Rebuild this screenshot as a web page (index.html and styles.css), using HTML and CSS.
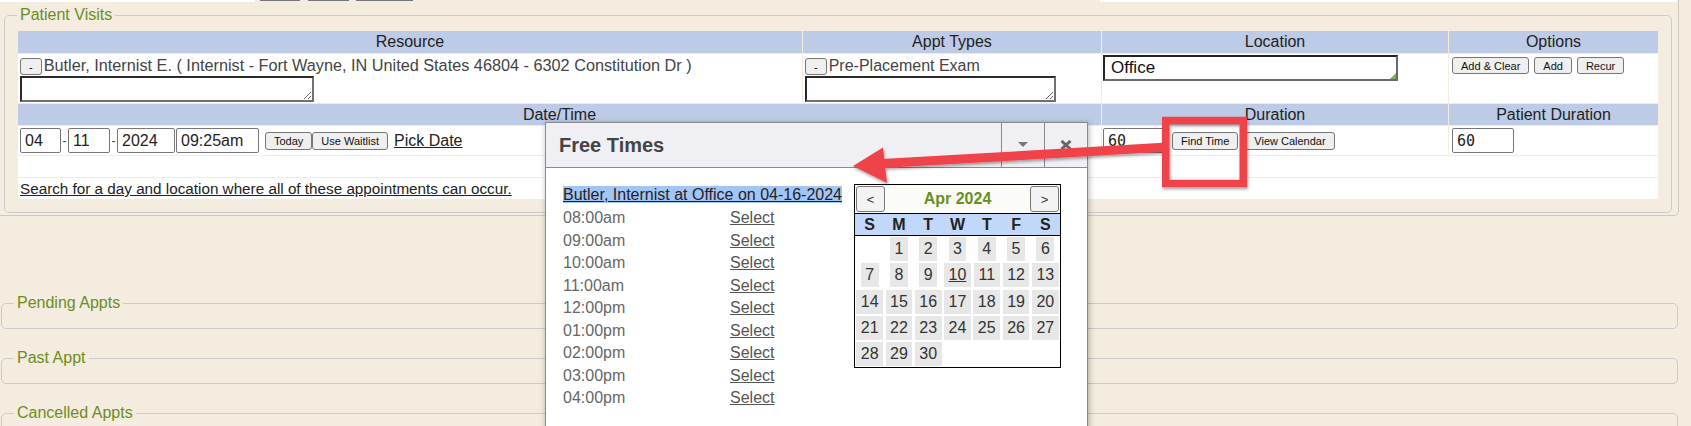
FILE: index.html
```html
<!DOCTYPE html>
<html lang="en">
<head>
  <meta charset="UTF-8" />
  <title>Patient Visits</title>
  <link rel="stylesheet" href="styles.css">
</head>
<body>
  <div class="page">
    <div class="outer">
      <div class="topstrip">
        <span class="ts-left"></span>
        <span class="ts-btn b1"></span>
        <span class="ts-btn b2"></span>
        <span class="ts-btn b3"></span>
        <span class="ts-right"></span>
      </div>

      <fieldset class="section">
        <legend>Patient Visits</legend>
        <table class="visits">
          <colgroup>
            <col class="c-res"><col class="c-type"><col class="c-loc"><col class="c-opt">
          </colgroup>
          <tr class="head">
            <th>Resource</th><th>Appt Types</th><th>Location</th><th>Options</th>
          </tr>
          <tr class="entry">
            <td>
              <div class="line res-line"><button class="mini">-</button>Butler, Internist E. ( Internist - Fort Wayne, IN United States 46804 - 6302 Constitution Dr )</div>
              <textarea class="notes res-notes"></textarea>
            </td>
            <td>
              <div class="line"><button class="mini">-</button>Pre-Placement Exam</div>
              <textarea class="notes type-notes"></textarea>
            </td>
            <td class="loc-cell">
              <span class="loc-wrap"><input class="loc" type="text" value="Office"></span>
            </td>
            <td class="opt-cell"><button class="small">Add &amp; Clear</button><button class="small">Add</button><button class="small">Recur</button></td>
          </tr>
          <tr class="head head2">
            <th colspan="2">Date/Time</th><th>Duration</th><th>Patient Duration</th>
          </tr>
          <tr class="inputs">
            <td colspan="2"><input class="d mm" value="04"><span class="dash">-</span><input class="d dd" value="11"><span class="dash">-</span><input class="d yy" value="2024"><input class="d tm" value="09:25am"><button class="small tall today">Today</button><button class="small tall">Use Waitlist</button><a class="plain pick" href="#">Pick Date</a></td>
            <td class="loc-cell"><input class="num" value="60"><button class="small tall find">Find Time</button><button class="small tall view">View Calendar</button></td>
            <td class="pd-cell"><input class="num" value="60"></td>
          </tr>
          <tr class="blank"><td colspan="4"></td></tr>
          <tr class="search"><td colspan="4"><a class="plain" href="#">Search for a day</a><a class="plain" href="#"> and location where all of these appointments can occur.</a></td></tr>
        </table>
      </fieldset>
    </div>

    <fieldset class="section empty first"><legend>Pending Appts</legend></fieldset>
    <fieldset class="section empty"><legend>Past Appt</legend></fieldset>
    <fieldset class="section empty"><legend>Cancelled Appts</legend></fieldset>
  </div>

  <div class="popup">
    <div class="ft-head">
      <div class="ft-title">Free Times</div>
      <div class="ft-btn">
        <svg width="10" height="6" viewBox="0 0 10 6"><polygon points="0,0 10,0 5,5" fill="#777"/></svg>
      </div>
      <div class="ft-btn last">
        <svg width="12" height="10" viewBox="0 0 12 10"><path d="M1.5 1 L10.5 9 M10.5 1 L1.5 9" stroke="#666" stroke-width="3"/></svg>
      </div>
    </div>
    <div class="ft-body">
      <div class="slots">
        <div class="picked-row"><a class="picked" href="#">Butler, Internist at Office on 04-16-2024</a></div>
        <div class="slot"><span>08:00am</span><a href="#">Select</a></div>
        <div class="slot"><span>09:00am</span><a href="#">Select</a></div>
        <div class="slot"><span>10:00am</span><a href="#">Select</a></div>
        <div class="slot"><span>11:00am</span><a href="#">Select</a></div>
        <div class="slot"><span>12:00pm</span><a href="#">Select</a></div>
        <div class="slot"><span>01:00pm</span><a href="#">Select</a></div>
        <div class="slot"><span>02:00pm</span><a href="#">Select</a></div>
        <div class="slot"><span>03:00pm</span><a href="#">Select</a></div>
        <div class="slot"><span>04:00pm</span><a href="#">Select</a></div>
      </div>
      <div class="cal">
        <div class="cal-head">
          <button class="cal-nav">&lt;</button>
          <span class="cal-title">Apr 2024</span>
          <button class="cal-nav">&gt;</button>
        </div>
        <table class="cal-grid">
          <thead>
            <tr><th>S</th><th>M</th><th>T</th><th>W</th><th>T</th><th>F</th><th>S</th></tr>
          </thead>
          <tbody>
            <tr><td></td><td><span class="day">1</span></td><td><span class="day">2</span></td><td><span class="day">3</span></td><td><span class="day">4</span></td><td><span class="day">5</span></td><td><span class="day">6</span></td></tr>
            <tr><td><span class="day">7</span></td><td><span class="day">8</span></td><td><span class="day">9</span></td><td><span class="day today-day">10</span></td><td><span class="day">11</span></td><td><span class="day">12</span></td><td><span class="day">13</span></td></tr>
            <tr><td><span class="day">14</span></td><td><span class="day">15</span></td><td><span class="day">16</span></td><td><span class="day">17</span></td><td><span class="day">18</span></td><td><span class="day">19</span></td><td><span class="day">20</span></td></tr>
            <tr><td><span class="day">21</span></td><td><span class="day">22</span></td><td><span class="day">23</span></td><td><span class="day">24</span></td><td><span class="day">25</span></td><td><span class="day">26</span></td><td><span class="day">27</span></td></tr>
            <tr><td><span class="day">28</span></td><td><span class="day">29</span></td><td><span class="day">30</span></td><td></td><td></td><td></td><td></td></tr>
          </tbody>
        </table>
      </div>
    </div>
  </div>

  <svg class="annot" width="1691" height="426" viewBox="0 0 1691 426">
    <defs>
      <filter id="shadow" x="-20%" y="-40%" width="140%" height="180%">
        <feDropShadow dx="1" dy="2" stdDeviation="1.5" flood-color="#000" flood-opacity="0.35"/>
      </filter>
    </defs>
    <g filter="url(#shadow)">
      <rect x="1165.75" y="120.5" width="77.5" height="63" fill="none" stroke="#f0434a" stroke-width="7.5"/>
      <line x1="1168" y1="147" x2="882" y2="163.6" stroke="#f0434a" stroke-width="9"/>
      <polygon points="853,166 883,147.5 887,183" fill="#f0434a"/>
    </g>
  </svg>
</body>
</html>
```

FILE: styles.css
```css
body {
  margin: 0;
  height: 426px;
  overflow: hidden;
  position: relative;
  background: #f3ecdf;
  font-family: "Liberation Sans", Arial, sans-serif;
  font-size: 16px;
  color: #222;
}
input, button, textarea { font-family: inherit; }

.page { margin-right: 12px; }
.outer {
  border-right: 1px solid #ccc9c3;
  border-bottom: 1px solid #ccc9c3;
  border-bottom-right-radius: 5px;
  padding: 0 6px 2px 4px;
}
.topstrip { display: flex; height: 2px; margin: 0 -6px 0 -4px; }
.ts-left { width: 255px; background: #fff; }
.ts-btn { height: 1px; background: #777; }
.ts-btn.b1 { width: 40px; margin-left: 5px; }
.ts-btn.b2 { width: 41px; margin-left: 8px; }
.ts-btn.b3 { width: 57px; margin-left: 7px; }
.ts-right { width: 577px; margin-left: auto; margin-right: 1px; background: #fff; }

.section {
  border: 1px solid #cbcbcb;
  border-radius: 5px;
  margin: 4px 0 0;
  padding: 6px 12px 12px;
  min-width: 0;
}
.section legend { padding: 0 3px; color: #6b8e23; line-height: 18px; }
.section.empty { margin: 20px 1px 0; padding: 6px 12px 10px; }
.section.empty.first { margin-top: 78px; }

.visits { width: 100%; border-spacing: 1px; table-layout: fixed; }
.c-res { width: 784px; }
.c-type { width: 298px; }
.c-loc { width: 346px; }
.c-opt { width: 209px; }
.visits th {
  background: #bdcbe6;
  font-weight: normal;
  height: 22px;
  line-height: 22px;
  padding: 0;
  color: #222;
}
.visits .head2 th { height: 21px; line-height: 21px; }
.visits td { background: #fff; padding: 1px 2px; vertical-align: top; color: #444; }
.visits td.loc-cell { padding-left: 1px; }

.line { height: 21px; line-height: 21px; white-space: nowrap; overflow: hidden; }
.res-line { font-size: 16.25px; }
.mini {
  vertical-align: top;
  margin: 3px 2px 0 0;
  height: 17px;
  padding: 0 8px;
  font-size: 11px;
  background: #efefef;
  border: 1px solid #767676;
  border-radius: 3px;
}
.notes {
  display: block;
  margin: 0;
  height: 26px;
  box-sizing: border-box;
  border: 2px solid #2a2a2a;
  border-right-color: #707070;
  border-bottom-color: #707070;
}
.res-notes { width: 294px; }
.type-notes { width: 251px; }

.loc-wrap { position: relative; display: inline-block; }
.loc {
  width: 295px;
  height: 26px;
  box-sizing: border-box;
  border: 2px solid #222;
  border-right-color: #6a6a6a;
  border-bottom-color: #6a6a6a;
  padding: 0 6px;
  font-size: 17px;
  color: #111;
}
.loc-wrap::after {
  content: "";
  position: absolute;
  right: 2px;
  bottom: 2px;
  border-left: 6px solid transparent;
  border-bottom: 6px solid #7cb342;
}

.small {
  height: 17px;
  padding: 0 8px;
  font-size: 11px;
  color: #111;
  background: #efefef;
  border: 1px solid #767676;
  border-radius: 3px;
}
.opt-cell .small { margin: 2px 5px 0 0; }
.opt-cell .small:first-child { margin-left: 1px; }
.small.tall { height: 18px; vertical-align: middle; }

.inputs td { height: 29px; padding: 0 2px; vertical-align: middle; white-space: nowrap; }
.inputs td.pd-cell { padding-left: 3px; }
.d {
  height: 25px;
  box-sizing: border-box;
  border: 1px solid #767676;
  border-radius: 2px;
  padding: 0 4px;
  font-size: 16px;
  color: #222;
  vertical-align: middle;
}
.mm { width: 41px; }
.dd { width: 42px; }
.yy { width: 58px; }
.tm { width: 83px; margin-left: 1px; }
.dash { display: inline-block; width: 7px; text-align: center; font-size: 12px; color: #444; vertical-align: middle; }
.today { margin-left: 6px; }
.pick { margin-left: 6px; vertical-align: middle; }
.num {
  width: 62px;
  height: 25px;
  box-sizing: border-box;
  border: 1px solid #767676;
  border-radius: 2px;
  padding: 0 4px;
  font-family: "DejaVu Sans Mono", "Liberation Mono", monospace;
  font-size: 15px;
  color: #222;
  vertical-align: middle;
}
.find { margin-left: 7px; }
.view { margin-left: 7px; }
.blank td { height: 21px; padding: 0; }
.search td { height: 21px; padding: 0 2px; line-height: 21px; font-size: 15.25px; white-space: nowrap; }
a.plain { color: #222; }

/* Free Times popup */
.popup {
  position: absolute;
  left: 545px;
  top: 122px;
  width: 543px;
  height: 330px;
  box-sizing: border-box;
  border: 1px solid #8a8a8a;
  background: #fff;
  box-shadow: 1px 1px 6px rgba(0, 0, 0, 0.3);
  z-index: 5;
}
.ft-head { display: flex; height: 44px; background: #efeff4; border-bottom: 1px solid #8a8a8a; }
.ft-title { flex: 1; padding-left: 13px; font-weight: bold; font-size: 20px; line-height: 44px; color: #444; }
.ft-btn {
  width: 42px;
  border-left: 1px solid #8a8a8a;
  display: flex;
  align-items: center;
  justify-content: center;
}
.ft-btn.last { width: 42px; }
.ft-body { display: flex; gap: 6px; padding: 16px 0 0 17px; }
.slots { width: 285px; }
.picked-row { height: 23px; padding-top: 1px; box-sizing: border-box; line-height: 20px; white-space: nowrap; }
.picked { background: #a2c5f6; color: #222; }
.slot { display: grid; grid-template-columns: 167px auto; justify-items: start; line-height: 22.5px; color: #666; }
.slot a { color: #555; }

.cal { width: 207px; box-sizing: border-box; border: 1px solid #000; align-self: flex-start; }
.cal-head {
  display: flex;
  align-items: center;
  justify-content: space-between;
  height: 28px;
  padding: 0 1px;
  background: #fbfbf8;
  border-bottom: 1px solid #000;
}
.cal-nav {
  width: 29px;
  height: 26px;
  padding: 0;
  border: 1px solid #777;
  border-radius: 3px;
  background: #f3f3f3;
  font-size: 13px;
  color: #333;
}
.cal-title { font-weight: bold; font-size: 16px; color: #6b8e23; }
.cal-grid { width: 100%; border-spacing: 0; table-layout: fixed; }
.cal-grid th {
  height: 21px;
  padding: 0;
  background: #c2d8fb;
  border-bottom: 1px solid #000;
  font-size: 16px;
  color: #222;
}
.cal-grid td { height: 26.3px; padding: 0; text-align: center; vertical-align: middle; }
.day { display: inline-block; padding: 3px 4.5px; line-height: 18px; background: #e7e7e7; color: #333; }
.today-day { text-decoration: underline; }

.annot { position: absolute; left: 0; top: 0; z-index: 10; pointer-events: none; }
```
